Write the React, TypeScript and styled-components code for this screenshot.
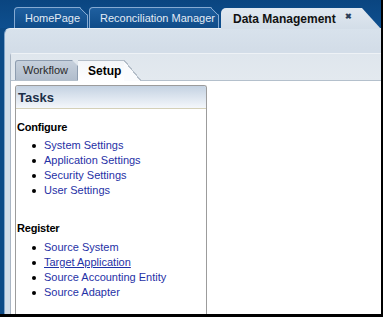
import React from 'react'
import styled, { createGlobalStyle } from 'styled-components'

const GlobalStyle = createGlobalStyle`
  body {
    margin: 0;
    background: #ffffff;
    font-family: "Liberation Sans", Arial, sans-serif;
  }
`

interface iSection {
  title: string
  items: string[]
  hover?: string
  spaced?: boolean
}

const sections: iSection[] = [
  {
    title: 'Configure',
    items: ['System Settings', 'Application Settings', 'Security Settings', 'User Settings'],
  },
  {
    title: 'Register',
    items: ['Source System', 'Target Application', 'Source Accounting Entity', 'Source Adapter'],
    hover: 'Target Application',
    spaced: true,
  },
]

const App: React.FC = () => {
  return (
    <>
      <GlobalStyle />
      <Frame>
        <TabBar>
          <TopTab $w={74}>HomePage</TopTab>
          <TopTab $w={130}>Reconciliation Manager</TopTab>
          <ActiveTab>
            Data Management
            <Close>✖</Close>
          </ActiveTab>
        </TabBar>
        <Panel>
          <Content>
            <SubTabBar>
              <SubTab>Workflow</SubTab>
              <SubTabActive>Setup</SubTabActive>
            </SubTabBar>
            <Work>
              <Tasks>
                <TasksHeader>Tasks</TasksHeader>
                <TasksBody>
                  {sections.map((s) => (
                    <Section key={s.title} $spaced={s.spaced}>
                      <SectionTitle>{s.title}</SectionTitle>
                      <List>
                        {s.items.map((it) => (
                          <Item key={it}>
                            <Link $hover={it === s.hover}>{it}</Link>
                          </Item>
                        ))}
                      </List>
                    </Section>
                  ))}
                </TasksBody>
              </Tasks>
            </Work>
          </Content>
        </Panel>
      </Frame>
    </>
  )
}

export default App

const Frame = styled.div`
  width: 383px;
  height: 317px;
  box-sizing: border-box;
  border-right: 2px solid #000;
  border-bottom: 3px solid #000;
  background: #0c4a86;
  display: flex;
  flex-direction: column;
  overflow: hidden;
`

const TabBar = styled.div`
  height: 28px;
  flex: none;
  display: flex;
  align-items: flex-end;
  gap: 1px;
  padding-left: 14px;
  background: linear-gradient(#0a4580, #0e4f8f);
`

const TopTab = styled.div<{ $w: number }>`
  width: ${({ $w }) => $w}px;
  height: 21px;
  box-sizing: border-box;
  padding-left: 10px;
  border: 1px solid #86aad2;
  border-bottom: none;
  border-radius: 4px 0 0 0;
  background:
    linear-gradient(to bottom left, transparent 50%, #86aad2 50%, #86aad2 calc(50% + 1px), transparent calc(50% + 1px)) top right / 8px 8px no-repeat border-box,
    linear-gradient(#1f5f9f, #0f4c89);
  clip-path: polygon(0 0, calc(100% - 8px) 0, 100% 8px, 100% 100%, 0 100%);
  color: #e2ebf5;
  font-size: 11px;
  line-height: 21px;
  white-space: nowrap;
`

const ActiveTab = styled.div`
  position: relative;
  z-index: 1;
  width: 141px;
  height: 21px;
  margin-bottom: -1px;
  margin-left: 1px;
  box-sizing: border-box;
  padding-left: 12px;
  border-radius: 5px 0 0 0;
  background: linear-gradient(#e0e8f0, #d3dde8);
  color: #111;
  font-size: 12px;
  font-weight: bold;
  line-height: 22px;
  white-space: nowrap;
  &::after {
    content: '';
    position: absolute;
    left: 100%;
    top: 0;
    width: 19px;
    height: 100%;
    background: linear-gradient(#e0e8f0, #d3dde8);
    clip-path: polygon(0 0, 100% 100%, 0 100%);
  }
`

const Close = styled.span`
  position: relative;
  top: -4px;
  margin-left: 9px;
  font-size: 8px;
  color: #2c3e58;
`

const Panel = styled.div`
  flex: 1;
  margin-left: 4px;
  display: flex;
  flex-direction: column;
  padding-top: 24px;
  background: linear-gradient(#d8e2ec, #d3dde8 20px);
  border-top: 1px solid #e9eff5;
  border-left: 1px solid #7fa3c8;
  border-radius: 6px 0 0 0;
  min-height: 0;
`

const Content = styled.div`
  flex: 1;
  margin-left: 5px;
  display: flex;
  flex-direction: column;
  background: #fff;
  border-top: 1px solid #eef2f6;
  border-left: 1px solid #aab6c4;
  border-radius: 3px 0 0 0;
  min-height: 0;
`

const SubTabBar = styled.div`
  height: 26px;
  flex: none;
  display: flex;
  align-items: flex-end;
  padding-left: 4px;
  background: linear-gradient(#dfe6ed, #e3e9ef);
  border-bottom: 1px solid #b4c0cc;
`

const SubTab = styled.div`
  width: 63px;
  height: 20px;
  box-sizing: border-box;
  padding-left: 7px;
  border: 1px solid #8e9db0;
  border-bottom: none;
  border-radius: 3px 0 0 0;
  background: linear-gradient(#c6d0dc, #b1bdcc);
  clip-path: polygon(0 0, calc(100% - 6px) 0, 100% 6px, 100% 100%, 0 100%);
  color: #2a2a2a;
  font-size: 11px;
  line-height: 19px;
`

const SubTabActive = styled.div`
  position: relative;
  width: 46px;
  height: 21px;
  margin-bottom: -1px;
  box-sizing: border-box;
  padding-left: 10px;
  border-top: 1px solid #b4bec9;
  background: linear-gradient(#f3f6f9, #ffffff);
  color: #000;
  font-size: 12px;
  font-weight: bold;
  line-height: 20px;
  &::after {
    content: '';
    position: absolute;
    left: 100%;
    top: -1px;
    width: 17px;
    height: calc(100% + 1px);
    background: linear-gradient(to bottom left, transparent calc(50% - 0.6px), #b4bec9 calc(50% - 0.6px), #b4bec9 calc(50% + 0.6px), #fafbfd calc(50% + 0.6px));
  }
`

const Work = styled.div`
  flex: 1;
  display: flex;
  padding: 4px 0 0 4px;
  min-height: 0;
`

const Tasks = styled.div`
  width: 192px;
  box-sizing: border-box;
  border: 1px solid #9c9c9c;
  border-bottom: none;
  border-radius: 3px 3px 0 0;
  display: flex;
  flex-direction: column;
`

const TasksHeader = styled.div`
  height: 22px;
  flex: none;
  padding-left: 2px;
  background: linear-gradient(#c4d2e2, #f4f7fb);
  border-bottom: 1px solid #d4d0b8;
  border-radius: 2px 2px 0 0;
  color: #1d2f48;
  font-size: 13px;
  font-weight: bold;
  line-height: 23px;
`

const TasksBody = styled.div`
  padding: 11px 0 0 1px;
  font-size: 11px;
`

const Section = styled.div<{ $spaced?: boolean }>`
  margin-top: ${({ $spaced }) => ($spaced ? '23px' : '0')};
`

const SectionTitle = styled.div`
  color: #000;
  font-weight: bold;
  line-height: 15px;
  letter-spacing: -0.2px;
`

const List = styled.ul`
  margin: 3px 0 0;
  padding: 0;
  list-style: none;
  ${Section} + ${Section} & {
    margin-top: 4px;
  }
`

const Item = styled.li`
  position: relative;
  padding-left: 27px;
  line-height: 15px;
  &::before {
    content: '';
    position: absolute;
    left: 15px;
    top: 6px;
    width: 4px;
    height: 4px;
    border-radius: 50%;
    background: #000;
  }
`

const Link = styled.a<{ $hover?: boolean }>`
  color: #1f31a6;
  text-decoration: ${({ $hover }) => ($hover ? 'underline' : 'none')};
  cursor: pointer;
`
